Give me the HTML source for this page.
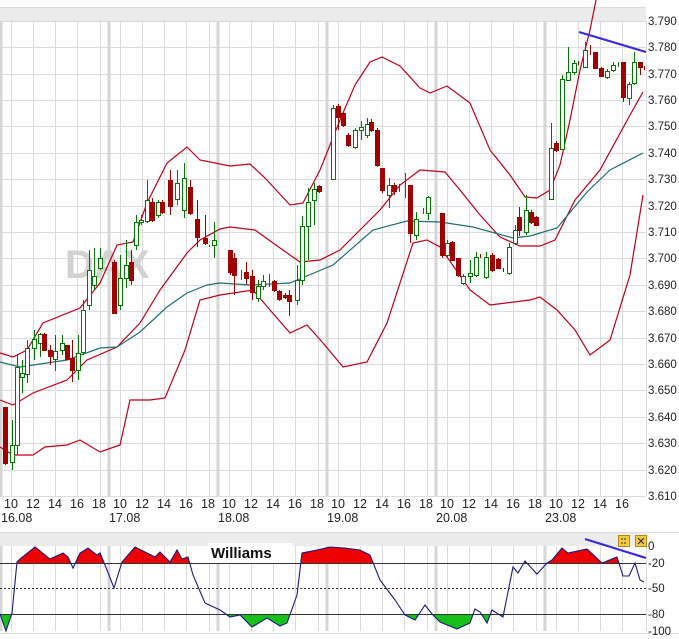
<!DOCTYPE html>
<html><head><meta charset="utf-8"><style>
html,body{margin:0;padding:0;background:#fff;width:679px;height:639px;overflow:hidden}
svg{display:block;font-family:"Liberation Sans",sans-serif}
</style></head><body>
<svg width="679" height="639" viewBox="0 0 679 639" xmlns="http://www.w3.org/2000/svg">
<rect x="0" y="0" width="679" height="639" fill="#fff"/>
<!-- top header -->
<rect x="0" y="7" width="646" height="14" fill="#ececec"/>
<line x1="0" y1="7.5" x2="646" y2="7.5" stroke="#dcdcdc"/>
<!-- horizontal grid main -->
<g stroke="#dcdcdc" stroke-width="1">
<line x1="0" y1="21.5" x2="646" y2="21.5"/><line x1="0" y1="47.5" x2="646" y2="47.5"/><line x1="0" y1="74.5" x2="646" y2="74.5"/><line x1="0" y1="100.5" x2="646" y2="100.5"/><line x1="0" y1="126.5" x2="646" y2="126.5"/><line x1="0" y1="153.5" x2="646" y2="153.5"/><line x1="0" y1="179.5" x2="646" y2="179.5"/><line x1="0" y1="206.5" x2="646" y2="206.5"/><line x1="0" y1="232.5" x2="646" y2="232.5"/><line x1="0" y1="258.5" x2="646" y2="258.5"/><line x1="0" y1="285.5" x2="646" y2="285.5"/><line x1="0" y1="311.5" x2="646" y2="311.5"/><line x1="0" y1="338.5" x2="646" y2="338.5"/><line x1="0" y1="364.5" x2="646" y2="364.5"/><line x1="0" y1="390.5" x2="646" y2="390.5"/><line x1="0" y1="417.5" x2="646" y2="417.5"/><line x1="0" y1="443.5" x2="646" y2="443.5"/><line x1="0" y1="470.5" x2="646" y2="470.5"/><line x1="0" y1="496.5" x2="646" y2="496.5"/>
</g>
<!-- vertical grid -->
<g stroke="#dcdcdc">
<path d="M11.5 21V496M33.5 21V496M55.5 21V496M77.5 21V496M100.5 21V496M120.5 21V496M142.5 21V496M164.5 21V496M186.5 21V496M209.5 21V496M229.5 21V496M251.5 21V496M273.5 21V496M295.5 21V496M318.5 21V496M338.5 21V496M360.5 21V496M382.5 21V496M404.5 21V496M427.5 21V496M447.5 21V496M469.5 21V496M491.5 21V496M513.5 21V496M536.5 21V496M556.5 21V496M578.5 21V496M600.5 21V496M622.5 21V496M646.5 21V496"/>
<path d="M11.5 546V631M33.5 546V631M55.5 546V631M77.5 546V631M100.5 546V631M120.5 546V631M142.5 546V631M164.5 546V631M186.5 546V631M209.5 546V631M229.5 546V631M251.5 546V631M273.5 546V631M295.5 546V631M318.5 546V631M338.5 546V631M360.5 546V631M382.5 546V631M404.5 546V631M427.5 546V631M447.5 546V631M469.5 546V631M491.5 546V631M513.5 546V631M536.5 546V631M556.5 546V631M578.5 546V631M600.5 546V631M622.5 546V631M646.5 546V631"/>
</g>
<g stroke="#d6d6d6" stroke-width="3">
<path d="M1 21V496M109 21V496M218 21V496M327 21V496M436 21V496M545 21V496"/>
<path d="M1 546V631M109 546V631M218 546V631M327 546V631M436 546V631M545 546V631"/>
</g>
<text x="65" y="278" font-size="40" font-weight="bold" fill="#d2d2d2">DAX</text>
<!-- bands -->
<g fill="none" stroke="#c00018" stroke-width="1.2">
<polyline points="0,353 13,357 27,350 43,323 80,308 100,283 117,245 133,242 147,203 167,163 187,147 200,160 230,166 250,164 265,178 290,205 303,203 320,170 340,120 355,85 370,62 382,57 400,66 420,88 430,93 447,86 470,103 490,150 510,175 525,197 537,198 550,190 560,165 570,120 580,70 590,30 596,0"/>
<polyline points="0,400 13,405 33,393 67,380 87,360 117,347 140,323 160,290 187,253 200,240 220,229 230,227 255,230 280,248 300,262 320,260 340,250 360,230 380,210 400,185 420,170 445,172 460,190 480,215 500,237 520,246 540,246 555,240 575,200 600,170 630,115 643,92"/>
<polyline points="0,447 13,455 33,455 45,447 67,445 80,440 100,452 120,445 130,400 150,400 165,398 185,350 200,300 220,295 253,290 270,310 290,333 307,325 323,343 343,367 367,362 387,323 413,243 427,240 440,247 470,290 490,305 530,300 540,297 557,310 575,330 590,355 610,340 630,275 643,195"/>
</g>
<polyline fill="none" stroke="#1e7070" stroke-width="1.2" points="0,362 20,367 67,360 100,348 117,347 140,332 167,307 187,293 207,285 220,283 250,285 290,283 333,265 373,230 407,221 440,222 473,227 513,238 530,236 557,228 587,192 610,170 643,153"/>
<!-- candles -->
<g stroke="#007a00" fill="#fff" stroke-width="1">
<path d="M12.5 420V470M17.5 355V455M22.5 360V393M27.5 340V383M34.5 330V360M40.5 333V357M55.5 335V371M62.5 335V355M78.5 335V380M83.5 300V355M89.5 250V310M94.5 248V290M100.5 248V270M120.5 255V310M126.5 240V288M136.5 215V250M141.5 215V225M147.5 180V223M158.5 200V218M177.5 170V205M184.5 163V218M209.5 245V247M214.5 222V258M241.5 270V280M258.5 280V302M263.5 275V290M269.5 274V287M297.5 265V305M302.5 216V285M308.5 188V260M314.5 183V225M333.5 105V180M355.5 128V149M361.5 121V140M367.5 118V138M389.5 178V208M399.5 184V192M405.5 173V198M416.5 212V240M423.5 208V214M428.5 196V220M447.5 240V257M463.5 274V285M470.5 260V283M476.5 252V277M486.5 252V279M509.5 243V275M515.5 225V245M526.5 195V235M551.5 123V200M562.5 75V150M568.5 47V80M574.5 60V75M585.5 42V67M607.5 69V79M613.5 62V72M618.5 62V67M629.5 82V105M634.5 52V85"/>
<rect x="10.5" y="445.5" width="4" height="17"/><rect x="15.5" y="367.5" width="4" height="78"/><rect x="20.5" y="373.5" width="4" height="4"/><rect x="25.5" y="348.5" width="4" height="26"/><rect x="32.5" y="339.5" width="4" height="9"/><rect x="38.5" y="334.5" width="4" height="9"/><rect x="53.5" y="351.5" width="4" height="8"/><rect x="60.5" y="343.5" width="4" height="7"/><rect x="76.5" y="353.5" width="4" height="17"/><rect x="81.5" y="310.5" width="4" height="42"/><rect x="87.5" y="270.5" width="4" height="35"/><rect x="92.5" y="276.5" width="4" height="9"/><rect x="98.5" y="258.5" width="4" height="10"/><rect x="118.5" y="278.5" width="4" height="27"/><rect x="124.5" y="265.5" width="4" height="13"/><rect x="134.5" y="222.5" width="4" height="23"/><rect x="139.5" y="220.5" width="4" height="2"/><rect x="145.5" y="200.5" width="4" height="21"/><rect x="156.5" y="202.5" width="4" height="13"/><rect x="175.5" y="183.5" width="4" height="16"/><rect x="182.5" y="178.5" width="4" height="32"/><rect x="212.5" y="240.5" width="4" height="5"/><rect x="256.5" y="286.5" width="4" height="12"/><rect x="261.5" y="281.5" width="4" height="5"/><rect x="295.5" y="280.5" width="4" height="20"/><rect x="300.5" y="226.5" width="4" height="54"/><rect x="306.5" y="202.5" width="4" height="24"/><rect x="312.5" y="189.5" width="4" height="11"/><rect x="331.5" y="108.5" width="4" height="71"/><rect x="353.5" y="130.5" width="4" height="17"/><rect x="359.5" y="127.5" width="4" height="3"/><rect x="365.5" y="124.5" width="4" height="11"/><rect x="387.5" y="185.5" width="4" height="10"/><rect x="414.5" y="219.5" width="4" height="16"/><rect x="426.5" y="197.5" width="4" height="16"/><rect x="445.5" y="243.5" width="4" height="12"/><rect x="461.5" y="276.5" width="4" height="7"/><rect x="468.5" y="273.5" width="4" height="3"/><rect x="474.5" y="257.5" width="4" height="18"/><rect x="484.5" y="257.5" width="4" height="20"/><rect x="507.5" y="247.5" width="4" height="26"/><rect x="513.5" y="230.5" width="4" height="13"/><rect x="524.5" y="210.5" width="4" height="22"/><rect x="549.5" y="148.5" width="4" height="51"/><rect x="560.5" y="79.5" width="4" height="70"/><rect x="566.5" y="72.5" width="4" height="8"/><rect x="572.5" y="63.5" width="4" height="9"/><rect x="583.5" y="50.5" width="4" height="17"/><rect x="605.5" y="71.5" width="4" height="6"/><rect x="611.5" y="65.5" width="4" height="5"/><rect x="627.5" y="84.5" width="4" height="14"/><rect x="632.5" y="62.5" width="4" height="21"/>
</g>
<g stroke="#a00000" fill="#a00000" stroke-width="1">
<path d="M5.5 407V465M44.5 333V350M50.5 345V365M67.5 345V359M72.5 340V382M114.5 260V313M131.5 250V285M152.5 198V222M162.5 200V214M170.5 170V215M190.5 180V215M197.5 200V247M205.5 215V245M230.5 250V275M234.5 253V295M246.5 262V285M252.5 270V300M274.5 280V292M279.5 290V301M285.5 293V299M289.5 290V316M319.5 185V193M338.5 104V130M343.5 112V127M348.5 133V147M371.5 119V132M377.5 128V167M382.5 168V193M394.5 183V195M410.5 185V243M442.5 213V258M452.5 241V260M458.5 258V277M480.5 254V258M492.5 253V272M498.5 258V269M503.5 268V272M519.5 207V236M531.5 210V224M536.5 216V226M556.5 141V152M578.5 61V65M590.5 45V55M595.5 52V68M601.5 67V77M623.5 62V102M640.5 62V75M644.5 66V70"/>
<rect x="3.5" y="407.5" width="4" height="56"/><rect x="42.5" y="334.5" width="4" height="16"/><rect x="48.5" y="350.5" width="4" height="6"/><rect x="65.5" y="345.5" width="4" height="14"/><rect x="70.5" y="358.5" width="4" height="12"/><rect x="112.5" y="262.5" width="4" height="51"/><rect x="129.5" y="262.5" width="4" height="18"/><rect x="150.5" y="202.5" width="4" height="18"/><rect x="160.5" y="202.5" width="4" height="10"/><rect x="168.5" y="180.5" width="4" height="26"/><rect x="188.5" y="187.5" width="4" height="26"/><rect x="195.5" y="219.5" width="4" height="18"/><rect x="203.5" y="238.5" width="4" height="5"/><rect x="228.5" y="250.5" width="4" height="22"/><rect x="232.5" y="258.5" width="4" height="17"/><rect x="244.5" y="272.5" width="4" height="6"/><rect x="250.5" y="276.5" width="4" height="16"/><rect x="272.5" y="281.5" width="4" height="9"/><rect x="277.5" y="291.5" width="4" height="8"/><rect x="283.5" y="295.5" width="4" height="2"/><rect x="287.5" y="295.5" width="4" height="6"/><rect x="317.5" y="186.5" width="4" height="5"/><rect x="336.5" y="106.5" width="4" height="11"/><rect x="341.5" y="113.5" width="4" height="12"/><rect x="346.5" y="135.5" width="4" height="10"/><rect x="369.5" y="122.5" width="4" height="8"/><rect x="375.5" y="130.5" width="4" height="35"/><rect x="380.5" y="168.5" width="4" height="22"/><rect x="392.5" y="185.5" width="4" height="6"/><rect x="408.5" y="185.5" width="4" height="48"/><rect x="440.5" y="213.5" width="4" height="42"/><rect x="450.5" y="242.5" width="4" height="18"/><rect x="456.5" y="258.5" width="4" height="17"/><rect x="490.5" y="255.5" width="4" height="15"/><rect x="496.5" y="259.5" width="4" height="9"/><rect x="517.5" y="217.5" width="4" height="13"/><rect x="529.5" y="212.5" width="4" height="10"/><rect x="534.5" y="217.5" width="4" height="8"/><rect x="554.5" y="143.5" width="4" height="7"/><rect x="593.5" y="52.5" width="4" height="16"/><rect x="599.5" y="68.5" width="4" height="8"/><rect x="621.5" y="62.5" width="4" height="35"/><rect x="638.5" y="62.5" width="4" height="5"/>
</g>
<line x1="579" y1="32" x2="646" y2="52" stroke="#3a2ad8" stroke-width="2.2"/>
<!-- right axis -->
<g font-size="11.5" fill="#222">
<text x="648" y="25">3.790</text><text x="648" y="51">3.780</text><text x="648" y="78">3.770</text><text x="648" y="104">3.760</text><text x="648" y="130">3.750</text><text x="648" y="157">3.740</text><text x="648" y="183">3.730</text><text x="648" y="210">3.720</text><text x="648" y="236">3.710</text><text x="648" y="262">3.700</text><text x="648" y="289">3.690</text><text x="648" y="315">3.680</text><text x="648" y="342">3.670</text><text x="648" y="368">3.660</text><text x="648" y="394">3.650</text><text x="648" y="421">3.640</text><text x="648" y="447">3.630</text><text x="648" y="474">3.620</text><text x="648" y="500">3.610</text>
</g>
<!-- time axis -->
<g font-size="12.5" fill="#222" text-anchor="middle">
<text x="11" y="508">10</text><text x="33" y="508">12</text><text x="55" y="508">14</text><text x="77" y="508">16</text><text x="99" y="508">18</text>
<text x="120" y="508">10</text><text x="142" y="508">12</text><text x="164" y="508">14</text><text x="186" y="508">16</text><text x="208" y="508">18</text>
<text x="229" y="508">10</text><text x="251" y="508">12</text><text x="273" y="508">14</text><text x="295" y="508">16</text><text x="317" y="508">18</text>
<text x="338" y="508">10</text><text x="360" y="508">12</text><text x="382" y="508">14</text><text x="404" y="508">16</text><text x="426" y="508">18</text>
<text x="447" y="508">10</text><text x="469" y="508">12</text><text x="491" y="508">14</text><text x="513" y="508">16</text><text x="535" y="508">18</text>
<text x="556" y="508">10</text><text x="578" y="508">12</text><text x="600" y="508">14</text><text x="622" y="508">16</text>
</g>
<g font-size="12.5" fill="#222">
<text x="1" y="522">16.08</text><text x="109" y="522">17.08</text><text x="218" y="522">18.08</text><text x="327" y="522">19.08</text><text x="436" y="522">20.08</text><text x="545" y="522">23.08</text>
</g>
<!-- lower panel -->
<rect x="0" y="532" width="646" height="14" fill="#ececec"/>
<line x1="0" y1="532.5" x2="679" y2="532.5" stroke="#dcdcdc"/>
<line x1="0" y1="633.5" x2="679" y2="633.5" stroke="#dcdcdc"/>
<defs>
<clipPath id="ca"><rect x="0" y="540" width="646" height="23"/></clipPath>
<clipPath id="cb"><rect x="0" y="614" width="646" height="20"/></clipPath>
</defs>
<polygon clip-path="url(#ca)" fill="#ee0000" points="0,563 0,614 6,631 12,613 17,562 20,559 35,547 50,559 63,553 68,557 73,568 80,553 88,548 97,555 100,553 105,565 114,588 122,562 135,547 147,553 155,557 160,552 170,562 177,550 182,559 188,557 193,575 205,603 220,610 230,617 240,615 252,627 267,618 280,626 287,623 297,595 302,553 317,550 330,547 345,548 360,550 370,555 380,580 395,600 405,615 415,620 425,605 432,614 440,622 457,629 470,623 475,609 480,612 487,623 492,610 503,617 513,567 518,573 525,561 537,574 547,563 552,560 562,548 568,553 587,549 602,563 617,557 623,576 629,576 635,563 640,580 644,582 644,563"/>
<polygon clip-path="url(#cb)" fill="#16c016" points="0,614 0,614 6,631 12,613 17,562 20,559 35,547 50,559 63,553 68,557 73,568 80,553 88,548 97,555 100,553 105,565 114,588 122,562 135,547 147,553 155,557 160,552 170,562 177,550 182,559 188,557 193,575 205,603 220,610 230,617 240,615 252,627 267,618 280,626 287,623 297,595 302,553 317,550 330,547 345,548 360,550 370,555 380,580 395,600 405,615 415,620 425,605 432,614 440,622 457,629 470,623 475,609 480,612 487,623 492,610 503,617 513,567 518,573 525,561 537,574 547,563 552,560 562,548 568,553 587,549 602,563 617,557 623,576 629,576 635,563 640,580 644,582 644,614"/>
<line x1="0" y1="563.5" x2="646" y2="563.5" stroke="#333"/>
<line x1="0" y1="614.5" x2="646" y2="614.5" stroke="#333"/>
<line x1="0" y1="588.5" x2="646" y2="588.5" stroke="#333" stroke-dasharray="2,2"/>
<polyline fill="none" stroke="#1a1a80" stroke-width="1.1" points="0,614 6,631 12,613 17,562 20,559 35,547 50,559 63,553 68,557 73,568 80,553 88,548 97,555 100,553 105,565 114,588 122,562 135,547 147,553 155,557 160,552 170,562 177,550 182,559 188,557 193,575 205,603 220,610 230,617 240,615 252,627 267,618 280,626 287,623 297,595 302,553 317,550 330,547 345,548 360,550 370,555 380,580 395,600 405,615 415,620 425,605 432,614 440,622 457,629 470,623 475,609 480,612 487,623 492,610 503,617 513,567 518,573 525,561 537,574 547,563 552,560 562,548 568,553 587,549 602,563 617,557 623,576 629,576 635,563 640,580 644,582"/>
<line x1="585" y1="539" x2="646" y2="558" stroke="#3a2ad8" stroke-width="2.2"/>
<rect x="208" y="543" width="85" height="20" fill="#fff"/>
<text x="211" y="558" font-size="15" font-weight="bold" fill="#111">Williams</text>
<rect x="618.5" y="535.5" width="11" height="11" fill="#f5c842" stroke="#b08a10"/>
<path d="M621 539h2M626 539h-2M621 543h2M626 543h-2" stroke="#333"/>
<rect x="635.5" y="535.5" width="11" height="11" fill="#f5c842" stroke="#b08a10"/>
<path d="M638 538l6 6M644 538l-6 6" stroke="#333" stroke-width="1.2"/>
<g font-size="11.5" fill="#222">
<text x="648" y="550">0</text><text x="648" y="567">-20</text><text x="648" y="592">-50</text><text x="648" y="618">-80</text><text x="648" y="635">-100</text>
</g>
</svg>
</body></html>
